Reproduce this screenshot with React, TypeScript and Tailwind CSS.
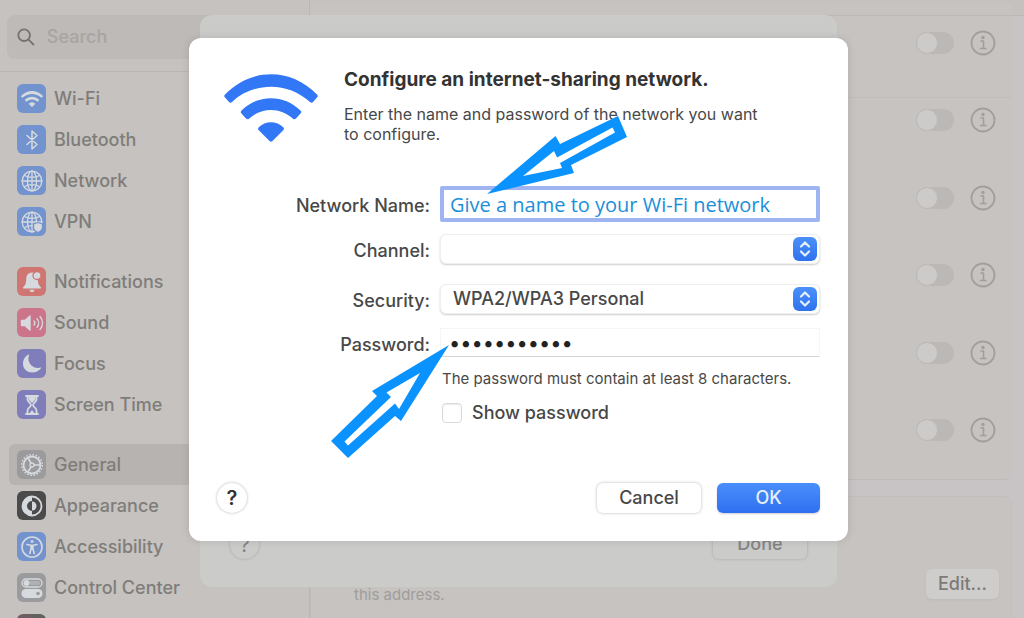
import React, { useState } from "react";

type Item = { label: string; color: string; icon: React.ReactNode; active?: boolean };

const stroke = { fill: "none", stroke: "currentColor", strokeLinecap: "round", strokeLinejoin: "round" } as const;

function WifiGlyph({ className }: { className: string }) {
  return (
    <svg viewBox="0 0 94 68" className={className} fill="currentColor" aria-hidden="true">
      <path d="M1 20.500Q-.5 22 1 23.500L5 28Q6.500 29.300 8 28C30 7.500 64 7.500 86 28Q87.500 29.300 89 28L93 23.500Q94.500 22 93 20.500C67-6.500 27-6.500 1 20.500Z" />
      <path d="M17.500 36.500Q16 38 17.500 39.500L22 44.500Q23.500 46 25 44.700C37.500 33 56.500 33 69 44.700Q70.500 46 72 44.500L76.500 39.500Q78 38 76.500 36.500C60 20 34 20 17.500 36.500Z" />
      <path d="M34.500 53.500Q33.500 55 34.800 56.300L45.500 67Q47 68.500 48.500 67L59.200 56.300Q60.500 55 59.500 53.500C52.500 46.500 41.500 46.500 34.500 53.500Z" />
    </svg>
  );
}

function Globe({ children }: { children?: React.ReactNode }) {
  return (
    <svg viewBox="0 0 24 24" className="size-6" {...stroke} strokeWidth="1.3" aria-hidden="true">
      <circle cx="12" cy="12" r="9.800" />
      <ellipse cx="12" cy="12" rx="4.500" ry="9.800" />
      <path d="M12 2.200v19.600M2.200 12h19.600M4.500 6.500c4 2.500 11 2.500 15 0M4.500 17.500c4-2.500 11-2.500 15 0" />
      {children}
    </svg>
  );
}

const groups: Item[][] = [
  [
    { label: "Wi-Fi", color: "bg-[#7393cf]", icon: <WifiGlyph className="h-4 w-6" /> },
    {
      label: "Bluetooth",
      color: "bg-[#7393cf]",
      icon: (
        <svg viewBox="0 0 24 24" className="size-6" {...stroke} strokeWidth="1.500" aria-hidden="true">
          <path d="M7 7.500l10 9L12 21V3l5 4.500-10 9" />
        </svg>
      ),
    },
    { label: "Network", color: "bg-[#7393cf]", icon: <Globe /> },
    {
      label: "VPN",
      color: "bg-[#7393cf]",
      icon: (
        <Globe>
          <path d="M18 12.500l4.500 1.500v3.500c0 2.500-2 4-4.500 5-2.500-1-4.500-2.500-4.500-5V14z" fill="currentColor" stroke="#7393cf" />
        </Globe>
      ),
    },
  ],
  [
    {
      label: "Notifications",
      color: "bg-[#cf7672]",
      icon: (
        <svg viewBox="0 0 24 24" className="size-6" fill="currentColor" aria-hidden="true">
          <path d="M12 2.500c-4 0-5.800 3-5.800 6.500 0 5-1.200 6-3 8.200-.5.700-.2 1.300.6 1.300h16.400c.8 0 1.100-.6.600-1.300-1.800-2.200-3-3.200-3-8.200 0-3.500-1.800-6.500-5.800-6.500zM9.500 19.700c.3 1.400 1.200 2.300 2.500 2.300s2.200-.9 2.500-2.300z" />
          <circle cx="17" cy="5.500" r="4" stroke="#cf7672" strokeWidth="1.300" />
        </svg>
      ),
    },
    {
      label: "Sound",
      color: "bg-[#cb748a]",
      icon: (
        <svg viewBox="0 0 24 24" className="size-6" {...stroke} strokeWidth="1.400" aria-hidden="true">
          <path d="M1.500 9.500h3.500L10 5v14l-5-4.500H1.500z" fill="currentColor" />
          <path d="M14 10c1 1.200 1 2.800 0 4M17 7.800c2.200 2.400 2.200 6 0 8.400M20 5.500c3.400 3.800 3.400 9.200 0 13" />
        </svg>
      ),
    },
    {
      label: "Focus",
      color: "bg-[#807dbb]",
      icon: (
        <svg viewBox="0 0 24 24" className="size-6" fill="currentColor" aria-hidden="true">
          <path d="M9 3.200C6.500 9.800 12 17.500 20.600 15.600c.5-.1.700.3.400.7C16 23.200 3 21.500 3 11.800 3 7.500 5.500 4.200 8.400 2.600c.4-.2.800.1.600.6z" />
        </svg>
      ),
    },
    {
      label: "Screen Time",
      color: "bg-[#807dbb]",
      icon: (
        <svg viewBox="0 0 24 24" className="size-6" {...stroke} strokeWidth="1.800" aria-hidden="true">
          <path d="M6 3h12M6 21h12M7.500 3v3.500c0 2.500 3.500 3.500 3.500 5.500s-3.500 3-3.500 5.500V21M16.500 3v3.500c0 2.500-3.500 3.500-3.500 5.500s3.500 3 3.500 5.500V21" />
          <path d="M8.500 3.500h7v3L12 10 8.500 6.500zM9 21l3-4 3 4z" fill="currentColor" stroke="none" />
        </svg>
      ),
    },
  ],
  [
    {
      label: "General",
      color: "bg-[#9b9b9d]",
      active: true,
      icon: (
        <svg viewBox="0 0 24 24" className="size-6" {...stroke} aria-hidden="true">
          <circle cx="12" cy="12" r="8.500" strokeWidth="1.800" />
          <circle cx="12" cy="12" r="10.300" strokeWidth="1.500" strokeDasharray="1.600 1.640" strokeLinecap="butt" />
          <circle cx="12" cy="12" r="2" strokeWidth="1.300" />
          <path d="M14 12h6M11 10.200L8 5M11 13.800L8 19" strokeWidth="1.600" />
        </svg>
      ),
    },
    {
      label: "Appearance",
      color: "bg-[#4c4b4b]",
      icon: (
        <svg viewBox="0 0 24 24" className="size-6" aria-hidden="true">
          <circle cx="12" cy="12" r="9.500" fill="none" stroke="currentColor" strokeWidth="1.800" />
          <path d="M12 2.500a9.500 9.500 0 0 0 0 19v-4.500a5 5 0 0 1 0-10z" fill="currentColor" />
          <path d="M12 7.500a4.500 4.500 0 0 1 0 9z" fill="currentColor" />
        </svg>
      ),
    },
    {
      label: "Accessibility",
      color: "bg-[#7393cf]",
      icon: (
        <svg viewBox="0 0 24 24" className="size-6" {...stroke} strokeWidth="1.600" aria-hidden="true">
          <circle cx="12" cy="12" r="10" />
          <circle cx="12" cy="6.500" r="1" fill="currentColor" strokeWidth="1" />
          <path d="M7 9.500l5 1 5-1M12 10.500v3.500M9.800 18.500l1.200-4.500v-3.500h2v3.500l1.200 4.500" />
        </svg>
      ),
    },
    {
      label: "Control Center",
      color: "bg-[#9b9b9d]",
      icon: (
        <svg viewBox="0 0 24 24" className="size-6" aria-hidden="true">
          <rect x="2" y="3" width="20" height="8" rx="4" fill="none" stroke="currentColor" strokeWidth="1.300" />
          <rect x="9" y="5" width="11" height="4" rx="2" fill="currentColor" opacity=".35" />
          <circle cx="6.500" cy="7" r="3" fill="currentColor" />
          <rect x="1.500" y="13" width="21" height="9" rx="4.500" fill="currentColor" />
          <circle cx="18" cy="17.500" r="1.800" fill="#9b9b9d" />
        </svg>
      ),
    },
    { label: "", color: "bg-linear-to-r from-[#755a64] to-[#56665f]", icon: null },
  ],
];

function Sidebar() {
  return (
    <nav className="flex w-[310px] shrink-0 flex-col border-r border-[#bab6b4] bg-[#c5c2bf]">
      <div className="border-b border-[#b9b6b4] pt-[15px] pr-2 pb-3 pl-[7px]">
        <label className="flex h-11 items-center gap-3 rounded-lg bg-[#bdbab7] px-2.5">
          <svg viewBox="0 0 20 20" className="size-5 text-[#75726f]" {...stroke} strokeWidth="2" aria-hidden="true">
            <circle cx="8" cy="8" r="6.500" />
            <path d="M13 13l5.500 5.500" />
          </svg>
          <input
            type="search"
            aria-label="Search"
            placeholder="Search"
            className="w-full bg-transparent text-lg font-medium outline-none placeholder:text-[#a8a5a2]"
          />
        </label>
      </div>
      <div className="flex flex-col gap-[19px] pt-1.5 pl-[9px]">
        {groups.map((group, i) => (
          <ul key={i}>
            {group.map((item) => (
              <li key={item.label}>
                <a
                  href="#"
                  className={`flex h-[41px] items-center gap-2 rounded-l-md pl-2 text-lg font-medium text-[#7f7d7a] ${item.active ? "bg-[#b7b3b0]" : ""}`}
                >
                  <span className={`flex size-[29px] shrink-0 items-center justify-center rounded-md text-[#d6dade] ${item.color}`}>
                    {item.icon}
                  </span>
                  {item.label}
                </a>
              </li>
            ))}
          </ul>
        ))}
      </div>
    </nav>
  );
}

function Settings() {
  const [on, setOn] = useState<boolean[]>([false, false, false, false, false, false]);
  return (
    <main className="flex min-w-0 flex-1 flex-col bg-[#c8c4c5]">
      <div className="h-4 shrink-0 border-b border-[#bbb8b5] bg-[#c5c1be]" />
      <ul className="-mt-3 mr-3 grid h-[476px] shrink-0 grid-rows-6 rounded-b-lg border-b border-[#bfbbb9] bg-[linear-gradient(#bbb8b5,#bbb8b5),linear-gradient(#c1bdba,#c1bdba),linear-gradient(#c6c3c0,#c6c3c0)] bg-[length:100%_1px,100%_1px,100%_100%] bg-[position:0_11px,0_93px,0_0] bg-no-repeat pb-2.5">
        {on.map((value, i) => (
          <li key={i} className="flex items-center justify-end gap-4 pr-4">
            <input
              type="checkbox"
              role="switch"
              aria-label={`Service ${i + 1}`}
              checked={value}
              onChange={() => setOn(on.map((v, j) => (j === i ? !v : v)))}
              className="h-[22px] w-[38px] appearance-none rounded-full bg-[#bbb8b5] before:block before:size-[22px] before:rounded-full before:border before:border-[#bdbab8] before:bg-[#cccbca] checked:bg-[#7393cf] checked:before:ml-4"
            />
            <button type="button" aria-label="Info" className="text-[#a19e9b]">
              <svg viewBox="0 0 26 26" className="size-[26px]" {...stroke} strokeWidth="1.800" aria-hidden="true">
                <circle cx="13" cy="13" r="11.500" />
                <path d="M11 11h2.500v7.500M10.500 18.500h5.500" strokeWidth="1.600" />
                <circle cx="13" cy="7.500" r=".8" fill="currentColor" />
              </svg>
            </button>
          </li>
        ))}
      </ul>
      <section className="mt-4 mr-3 flex h-[140px] shrink-0 items-start justify-between rounded-lg border border-[#c1bebb] bg-[#c6c3c0] pt-[72px] pr-3 pl-[43px]">
        <p className="pt-4 text-[15px] leading-5 text-[#a09d9a]">this address.</p>
        <button type="button" className="h-[30px] rounded-md bg-[#cfcdcb] px-3 text-lg leading-none font-medium text-[#7d7a77] shadow-xs">
          Edit...
        </button>
      </section>
    </main>
  );
}

function Chevrons() {
  return (
    <span className="pointer-events-none absolute top-[3px] right-[3px] flex size-6 items-center justify-center rounded-md bg-linear-to-b from-[#4a90fa] to-[#2f72ee] text-[#e6effd]">
      <svg viewBox="0 0 24 24" className="size-6" {...stroke} strokeWidth="2.200" aria-hidden="true">
        <path d="M8 9.500l4-4 4 4M8 14.500l4 4 4-4" />
      </svg>
    </span>
  );
}

const selectStyle =
  "block h-[30px] w-full appearance-none rounded-md border border-[#efefef] bg-white pl-3 text-lg leading-none font-medium text-[#484848] shadow-[0_1px_2px_rgba(0,0,0,0.2)] outline-none";

function ConfigureDialog() {
  const [name, setName] = useState("Give a name to your Wi-Fi network");
  const [password, setPassword] = useState("abcdefghijk");
  const [show, setShow] = useState(false);
  return (
    <form
      role="dialog"
      aria-labelledby="title"
      onSubmit={(e) => e.preventDefault()}
      className="relative w-[659px] rounded-xl bg-white px-7 pt-[30px] pb-7 text-[#484848] shadow-[0_0_8px_rgba(0,0,0,0.12)]"
    >
      <header className="flex gap-[26px] pl-[7px]">
        <WifiGlyph className="mt-1.5 h-[68px] w-[94px] shrink-0 text-[#3278f6]" />
        <div>
          <h1 id="title" className="text-[19px] leading-6 font-bold text-[#333333]">
            Configure an internet-sharing network.
          </h1>
          <p className="mt-3 w-[430px] text-[16px] leading-5">
            Enter the name and password of the network you want to configure.
          </p>
        </div>
      </header>

      <div className="mt-[42px] grid grid-cols-[213px_1fr] items-center gap-x-2.5 text-lg leading-6 font-medium">
        <label htmlFor="name" className="pt-1 text-right">Network Name:</label>
        <input
          id="name"
          value={name}
          onChange={(e) => setName(e.target.value)}
          className="h-9 w-full rounded-xs border-4 border-[#9fb4f0] bg-white px-1.5 font-['Open_Sans',sans-serif] text-xl leading-6 font-normal text-[#1c8fd8] outline-none"
        />

        <label htmlFor="channel" className="mt-3 pt-1 text-right">Channel:</label>
        <div className="relative mt-3">
          <select id="channel" className={selectStyle}>
            <option></option>
          </select>
          <Chevrons />
        </div>

        <label htmlFor="security" className="mt-5 pt-1 text-right">Security:</label>
        <div className="relative mt-5">
          <select id="security" className={selectStyle}>
            <option>WPA2/WPA3 Personal</option>
          </select>
          <Chevrons />
        </div>

        <label htmlFor="password" className="mt-3.5 pt-1 text-right">Password:</label>
        <input
          id="password"
          type={show ? "text" : "password"}
          value={password}
          onChange={(e) => setPassword(e.target.value)}
          className="mt-3.5 h-[29px] w-full border border-[#f5f5f5] border-b-[#d4d4d4] bg-white px-2 text-xl leading-6 font-normal text-[#222222] outline-none"
        />

        <p className="col-start-2 mt-3 pl-0.5 text-[15px] leading-5 font-normal">The password must contain at least 8 characters.</p>
        <label className="col-start-2 mt-3 flex items-center gap-2.5 leading-6">
          <input
            type="checkbox"
            checked={show}
            onChange={(e) => setShow(e.target.checked)}
            className="ml-0.5 size-5 appearance-none rounded-sm border border-[#d9d9d9] bg-white shadow-[inset_0_1px_1px_rgba(0,0,0,0.08)] checked:bg-[#3278f6]"
          />
          Show password
        </label>
      </div>

      <footer className="mt-[58px] flex items-center gap-4">
        <button
          type="button"
          aria-label="Help"
          className="mr-auto size-[30px] rounded-full bg-white text-xl leading-none font-semibold text-[#333333] shadow-[0_0_3px_rgba(0,0,0,0.3)]"
        >
          ?
        </button>
        <button type="button" className="h-[30px] w-[104px] rounded-md bg-white text-lg leading-none font-medium shadow-[0_0_3px_rgba(0,0,0,0.3)]">
          Cancel
        </button>
        <button
          type="submit"
          className="h-[30px] w-[103px] rounded-md bg-linear-to-b from-[#4a8efb] to-[#2f70f0] text-lg leading-none font-medium text-[#e6effd] shadow-[0_1px_2px_rgba(0,0,0,0.2)]"
        >
          OK
        </button>
      </footer>

      <svg viewBox="486 116 142 79" className="pointer-events-none absolute top-[78px] left-[297px] h-[79px] w-[142px]" aria-hidden="true">
        <path d="M487 194L555.500 136L560 144L618 116L627 137L571 165L574 173Z" fill="#0a93ff" />
        <path d="M523 176L554 151L557 157.500L612.500 127.500L615 132.500L560 163L562 168Z" fill="#fff" />
      </svg>
      <svg viewBox="331 344 119 115" className="pointer-events-none absolute top-[306px] left-[142px] h-[115px] w-[119px]" aria-hidden="true">
        <path d="M449 345L372 391L377 396L331 441L348 458L395 416L401 421Z" fill="#0a93ff" />
        <path d="M420 373L386.500 392.500L391 397L344.500 441.500L348 445.500L395 403.500L399 409Z" fill="#fff" />
      </svg>
    </form>
  );
}

export default function App() {
  return (
    <div className="relative flex h-screen overflow-hidden font-['Inter',sans-serif]">
      <Sidebar />
      <Settings />
      <div className="absolute inset-0 flex items-start justify-center pt-[15px] pl-[13px]">
        <div className="flex h-[572px] w-[637px] items-end justify-between rounded-xl bg-[#cbcbca] px-[30px] pb-7 text-[#858585]">
          <button type="button" aria-label="Help" className="size-[29px] rounded-full text-xl leading-none shadow-[0_0_3px_rgba(0,0,0,0.2)]">
            ?
          </button>
          <button type="button" className="h-[31px] w-[94px] rounded-md text-lg leading-none font-medium shadow-[0_0_3px_rgba(0,0,0,0.2)]">
            Done
          </button>
        </div>
      </div>
      <div className="absolute inset-0 flex items-start justify-center pt-[38px] pl-[13px]">
        <ConfigureDialog />
      </div>
    </div>
  );
}
